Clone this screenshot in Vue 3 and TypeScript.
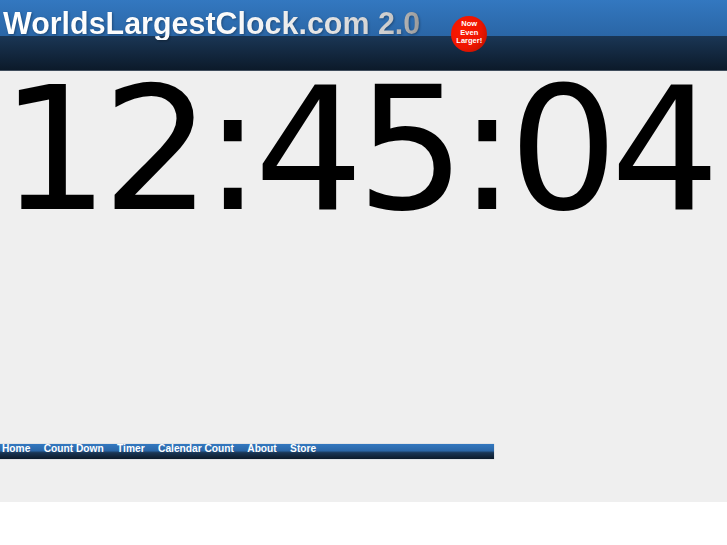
<script setup lang="ts">
const links: string[] = ['Home', 'Count Down', 'Timer', 'Calendar Count', 'About', 'Store']
</script>

<template>
  <div class="page">
    <header class="top">
      <h1 class="title">WorldsLargestClock.com 2.0</h1>
      <div class="badge">Now<br />Even<br />Larger!</div>
    </header>
    <main class="body">
      <div class="clock">12:45:04</div>
      <nav class="nav">
        <a v-for="l in links" :key="l" class="link">{{ l }}</a>
      </nav>
    </main>
  </div>
</template>

<style>
html, body { margin: 0; background: #fff; }
</style>

<style scoped>
.page { width: 727px; font-family: "Liberation Sans", Arial, sans-serif; }
.top {
  height: 71px;
  display: flex;
  align-items: flex-start;
  box-sizing: border-box;
  background: linear-gradient(#3378c0 0, #2a66a6 36px, #1a3655 36px, #0c1a2a 70px);
  border-bottom: 1px solid #3f4d5c;
}
.title {
  margin: 6px 0 0 3px;
  font-size: 30.45px;
  line-height: 34px;
  font-weight: bold;
  white-space: nowrap;
  color: transparent;
  background: linear-gradient(90deg, #fff 0, #fafafa 55%, #e2e2e2 78%, #cfcfcf 92%, #999 100%);
  -webkit-background-clip: text;
  background-clip: text;
  filter: drop-shadow(1px 1px 1px rgba(0,0,0,.3));
}
.badge {
  margin: 16px 0 0 31px;
  width: 36px;
  height: 36px;
  border-radius: 50%;
  background: radial-gradient(circle at 35% 40%, #fb1a00 0, #ee1500 55%, #a81000 100%);
  color: #fff;
  font-size: 7.5px;
  font-weight: bold;
  line-height: 8.5px;
  text-align: center;
  padding-top: 4px;
  box-sizing: border-box;
}
.body { background: #efefef; height: 431px; display: flex; flex-direction: column; }
.clock {
  font-family: "DejaVu Sans", sans-serif;
  font-size: 172px;
  line-height: 157px;
  letter-spacing: -7.5px;
  color: #000;
  white-space: nowrap;
  height: 373px;
  box-sizing: border-box;
}
.nav {
  width: 494px;
  height: 15px;
  display: flex;
  gap: 13.4px;
  padding-left: 2px;
  box-sizing: border-box;
  background: linear-gradient(#3378c0 0, #2a66a6 45%, #1a3655 58%, #0c1a2a 100%);
  box-shadow: 0 0 1px rgba(120,140,160,.6);
}
.link { color: #fff; font-size: 10.2px; font-weight: bold; line-height: 10px; }
</style>
